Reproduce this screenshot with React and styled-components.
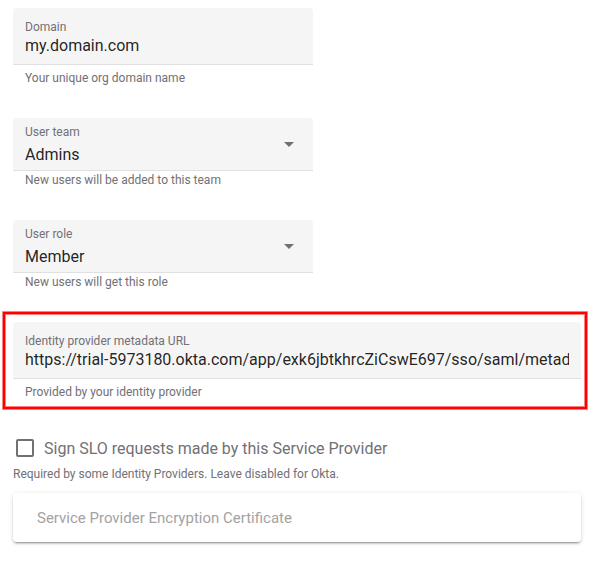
import React, { useState } from "react";
import styled, { createGlobalStyle } from "styled-components";

const GlobalStyle = createGlobalStyle`
  * { box-sizing: border-box; }
  body {
    margin: 0;
    background: #ffffff;
    font-family: Roboto, "Liberation Sans", sans-serif;
    color: rgba(0, 0, 0, 0.87);
  }
`;

const Form = styled.form`
  display: flex;
  flex-direction: column;
  padding: 8px 12px 18px 13px;
`;

const Field = styled.div`
  width: ${(p) => (p.$wide ? "100%" : "300px")};
  max-width: 100%;
`;

const FilledBox = styled.div`
  display: flex;
  flex-direction: column;
  position: relative;
  height: ${(p) => (p.$select ? "53px" : "57px")};
  padding: ${(p) => (p.$select ? "6px" : "11px")} 12px 0;
  background: #f5f5f5;
  border-bottom: 1px solid #e0e0e0;
  border-radius: 4px 4px 0 0;
`;

const Label = styled.label`
  font-size: 12px;
  line-height: 16px;
  color: #727075;
`;

const Input = styled.input`
  width: 100%;
  height: 22px;
  padding: 0;
  border: 0;
  outline: 0;
  background: transparent;
  font: 16px/22px Roboto, "Liberation Sans", sans-serif;
  color: inherit;
`;

const Select = styled.select`
  width: 100%;
  height: 30px;
  padding: 0;
  border: 0;
  outline: 0;
  appearance: none;
  background: transparent;
  font: 16px/30px Roboto, "Liberation Sans", sans-serif;
  color: inherit;
`;

const Arrow = styled.svg`
  position: absolute;
  top: 24px;
  right: 19px;
  width: 10px;
  height: 5px;
  fill: #727075;
  pointer-events: none;
`;

const Hint = styled.div`
  padding: ${(p) => (p.$spaced ? "4px" : "0")} 0 0 ${(p) => (p.$flush ? "0" : "12px")};
  font-size: 12px;
  line-height: 18px;
  color: #727075;
`;

const Stack = styled.div`
  display: flex;
  flex-direction: column;
  gap: 31px;
`;

const Highlight = styled.section`
  margin: 21px -6px 0 -10px;
  padding: 8px 4px 6px 8px;
  border: 2px solid #ff0000;
  box-shadow: 0 0 0 1px #ff8080, inset 0 0 0 1px #ff8080;
`;

const CheckRow = styled.label`
  display: flex;
  align-items: center;
  gap: 10px;
  height: 24px;
  margin: 27px 0 5px 3px;
  font-size: 16px;
  color: #727075;
`;

const Checkbox = styled.input`
  appearance: none;
  flex: none;
  width: 18px;
  height: 18px;
  margin: 0;
  border: 2px solid #727075;
  border-radius: 2px;
  &:checked { background: #727075; }
`;

const CertificateButton = styled.button`
  width: 100%;
  height: 49px;
  margin-top: 10px;
  padding: 0 24px;
  border: 0;
  border-radius: 4px;
  background: #ffffff;
  box-shadow: 0 3px 1px -2px rgba(0, 0, 0, 0.2), 0 2px 2px rgba(0, 0, 0, 0.14),
    0 1px 5px rgba(0, 0, 0, 0.12);
  font: 15px/20px Roboto, "Liberation Sans", sans-serif;
  text-align: left;
  color: #a3a3a3;
`;

function TextField({ id, label, hint, initial, wide }) {
  const [value, setValue] = useState(initial);
  return (
    <Field $wide={wide}>
      <FilledBox>
        <Label htmlFor={id}>{label}</Label>
        <Input id={id} value={value} onChange={(e) => setValue(e.target.value)} />
      </FilledBox>
      <Hint $spaced>{hint}</Hint>
    </Field>
  );
}

function SelectField({ id, label, hint, options }) {
  return (
    <Field>
      <FilledBox $select>
        <Label htmlFor={id}>{label}</Label>
        <Select id={id}>
          {options.map((option) => (
            <option key={option}>{option}</option>
          ))}
        </Select>
        <Arrow viewBox="0 0 10 5" aria-hidden="true">
          <path d="M0 0h10L5 5z" />
        </Arrow>
      </FilledBox>
      <Hint>{hint}</Hint>
    </Field>
  );
}

export default function App() {
  return (
    <>
      <GlobalStyle />
      <Form onSubmit={(e) => e.preventDefault()}>
        <Stack>
          <TextField id="domain" label="Domain" initial="my.domain.com" hint="Your unique org domain name" />
          <SelectField id="team" label="User team" options={["Admins"]} hint="New users will be added to this team" />
          <SelectField id="role" label="User role" options={["Member"]} hint="New users will get this role" />
        </Stack>
        <Highlight>
          <TextField
            id="metadata"
            wide
            label="Identity provider metadata URL"
            initial="https://trial-5973180.okta.com/app/exk6jbtkhrcZiCswE697/sso/saml/metadata"
            hint="Provided by your identity provider"
          />
        </Highlight>
        <CheckRow>
          <Checkbox type="checkbox" />
          Sign SLO requests made by this Service Provider
        </CheckRow>
        <Hint $flush>Required by some Identity Providers. Leave disabled for Okta.</Hint>
        <CertificateButton type="button">Service Provider Encryption Certificate</CertificateButton>
      </Form>
    </>
  );
}
